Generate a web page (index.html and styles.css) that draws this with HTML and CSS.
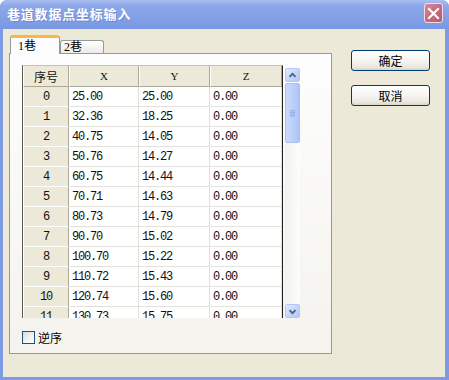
FILE: index.html
```html
<!DOCTYPE html>
<html>
<head>
<meta charset="utf-8">
<link rel="stylesheet" href="styles.css">
</head>
<body>
<div class="window">
  <div class="titlebar">
    <span class="title">巷道数据点坐标输入</span>
    <div class="close">
      <svg width="13" height="13" viewBox="0 0 13 13"><path d="M2 2 L11 11 M11 2 L2 11" stroke="#fff" stroke-width="2.2" stroke-linecap="square"/></svg>
    </div>
  </div>
  <div class="client">
    <div class="tabctl">
      <div class="tabs">
        <div class="tab active">1巷</div>
        <div class="tab">2巷</div>
      </div>
      <div class="panel">
        <div class="gridwrap">
          <div class="grid">
            <div class="hcell corner">序号</div>
            <div class="hcell col">X</div>
            <div class="hcell col">Y</div>
            <div class="hcell col">Z</div>

            <div class="rh">0</div><div class="c">25.00</div><div class="c">25.00</div><div class="c">0.00</div>
            <div class="rh">1</div><div class="c">32.36</div><div class="c">18.25</div><div class="c">0.00</div>
            <div class="rh">2</div><div class="c">40.75</div><div class="c">14.05</div><div class="c">0.00</div>
            <div class="rh">3</div><div class="c">50.76</div><div class="c">14.27</div><div class="c">0.00</div>
            <div class="rh">4</div><div class="c">60.75</div><div class="c">14.44</div><div class="c">0.00</div>
            <div class="rh">5</div><div class="c">70.71</div><div class="c">14.63</div><div class="c">0.00</div>
            <div class="rh">6</div><div class="c">80.73</div><div class="c">14.79</div><div class="c">0.00</div>
            <div class="rh">7</div><div class="c">90.70</div><div class="c">15.02</div><div class="c">0.00</div>
            <div class="rh">8</div><div class="c">100.70</div><div class="c">15.22</div><div class="c">0.00</div>
            <div class="rh">9</div><div class="c">110.72</div><div class="c">15.43</div><div class="c">0.00</div>
            <div class="rh">10</div><div class="c">120.74</div><div class="c">15.60</div><div class="c">0.00</div>
            <div class="rh">11</div><div class="c">130.73</div><div class="c">15.75</div><div class="c">0.00</div>
          </div>
          <div class="scrollbar">
            <div class="sbtn">
              <svg width="15" height="15" viewBox="0 0 15 15"><path d="M4 9 L7.5 5.5 L11 9" fill="none" stroke="#4d6185" stroke-width="2"/></svg>
            </div>
            <div class="thumb">
              <svg width="15" height="10" viewBox="0 0 15 10"><path d="M4.5 2.5 H10.5 M4.5 4.5 H10.5 M4.5 6.5 H10.5 M4.5 8.5 H10.5" stroke="#8ca4e0" stroke-width="1"/></svg>
            </div>
            <div class="track"></div>
            <div class="sbtn">
              <svg width="15" height="15" viewBox="0 0 15 15"><path d="M4 6 L7.5 9.5 L11 6" fill="none" stroke="#4d6185" stroke-width="2"/></svg>
            </div>
          </div>
        </div>
        <label class="check">
          <span class="box"></span>
          <span class="lbl">逆序</span>
        </label>
      </div>
    </div>
    <div class="buttons">
      <div class="btn">确定</div>
      <div class="btn">取消</div>
    </div>
  </div>
</div>
</body>
</html>
```

FILE: styles.css
```css
html, body {
  margin: 0;
  padding: 0;
  background: #ffffff;
}
body {
  width: 449px;
  height: 380px;
  overflow: hidden;
  font-family: "Noto Sans CJK SC", "Liberation Sans", sans-serif;
  font-size: 12px;
  color: #000;
}
.window {
  width: 449px;
  height: 380px;
  display: flex;
  flex-direction: column;
  border-radius: 7px 7px 0 0;
  overflow: hidden;
  background: #7d9ae3;
}
.titlebar {
  height: 29px;
  flex: none;
  display: flex;
  align-items: center;
  justify-content: space-between;
  padding: 0 6px 0 7px;
  background: linear-gradient(#aac0f3 0%, #8ea9ea 18%, #84a1e7 55%, #7d9be4 85%, #7896e2 100%);
}
.title {
  color: #ffffff;
  font-weight: bold;
  font-size: 13px;
  letter-spacing: 0.8px;
  text-shadow: 1px 1px 0 #6f87c9;
  margin-top: -2px;
}
.close {
  width: 17px;
  height: 18px;
  border: 1px solid #f0dbe3;
  border-radius: 3px;
  background: linear-gradient(135deg, #d58a9b 0%, #c46c81 50%, #b25a71 100%);
  display: flex;
  align-items: center;
  justify-content: center;
  margin-top: -3px;
}
.client {
  flex: 1;
  display: flex;
  align-items: flex-start;
  background: #ece9d8;
  margin: 0 4px 3px 3px;
  padding: 6px 0 0 6px;
}
.tabctl {
  width: 323px;
  display: flex;
  flex-direction: column;
}
.tabs {
  display: flex;
  align-items: flex-end;
  height: 18px;
  padding-left: 1px;
  position: relative;
  z-index: 1;
}
.tab {
  height: 13px;
  width: 44px;
  box-sizing: border-box;
  border: 1px solid #919b9c;
  border-bottom: none;
  border-radius: 3px 3px 0 0;
  background: linear-gradient(#ffffff, #ecebe6);
  padding-left: 3px;
  line-height: 12px;
  font-size: 12px;
  font-family: "Liberation Serif", "Noto Sans CJK SC", serif;
}
.tab.active {
  height: 19px;
  width: 50px;
  margin-bottom: -1px;
  background: #fcfcfe;
  border-top: 3px solid #f7b844;
  padding-left: 7px;
  padding-top: 2px;
  line-height: 12px;
}
.panel {
  height: 301px;
  box-sizing: border-box;
  border: 1px solid #919b9c;
  background: linear-gradient(#fdfdfd, #f4f3ee);
  padding: 11px 0 0 12px;
  display: flex;
  flex-direction: column;
}
.gridwrap {
  display: flex;
  height: 253px;
  width: 280px;
}
.grid {
  width: 261px;
  height: 253px;
  overflow: hidden;
  box-sizing: border-box;
  border-left: 1px solid #5a5a5a;
  border-right: 1px solid #202020;
  border-top: 1px solid #c5c2b2;
  background: #ffffff;
  display: grid;
  grid-template-columns: 46px 70px 71px 72px;
  grid-auto-rows: 20px;
  grid-template-rows: 21px;
  align-content: start;
  font-family: "Liberation Mono", monospace;
  font-size: 12px;
  letter-spacing: -1.2px;
  color: #111;
}
.hcell {
  box-sizing: border-box;
  background: #ece9d8;
  border-right: 1px solid #aca899;
  border-bottom: 1px solid #aca899;
  border-left: 1px solid #ffffff;
  display: flex;
  align-items: center;
  justify-content: center;
}
.corner {
  font-family: "Noto Sans CJK SC", sans-serif;
  letter-spacing: 0;
  font-size: 12px;
}
.col {
  font-family: "Liberation Serif", serif;
  letter-spacing: 0;
  font-size: 11px;
}
.rh {
  box-sizing: border-box;
  background: #ece9d8;
  border-right: 1px solid #aca899;
  border-bottom: 1px solid #ffffff;
  border-left: 1px solid #ffffff;
  display: flex;
  align-items: center;
  justify-content: center;
  letter-spacing: -1.2px;
}
.c {
  box-sizing: border-box;
  border-right: 1px solid #e2e1da;
  border-bottom: 1px solid #e2e1da;
  padding-left: 3px;
  display: flex;
  align-items: center;
}
.scrollbar {
  width: 16px;
  margin-left: 2px;
  margin-top: 3px;
  height: 250px;
  display: flex;
  flex-direction: column;
}
.sbtn {
  width: 15px;
  height: 14px;
  box-sizing: border-box;
  border: 1px solid #b6c9f4;
  border-radius: 2px;
  background: linear-gradient(135deg, #e2ebfe 0%, #c6d6fb 50%, #b4c8f6 100%);
  display: flex;
  align-items: center;
  justify-content: center;
  overflow: hidden;
}
.thumb {
  width: 15px;
  height: 60px;
  margin-top: 1px;
  box-sizing: border-box;
  border: 1px solid #a9bff0;
  border-radius: 2px;
  background: linear-gradient(90deg, #cbdafc 0%, #bcd0fa 50%, #aec4f6 100%);
  display: flex;
  align-items: center;
  justify-content: center;
}
.track {
  flex: 1;
  width: 15px;
  background: linear-gradient(90deg, #f3f2ee, #fdfdfb);
}
.check {
  display: flex;
  align-items: center;
  margin-top: 13px;
  height: 13px;
}
.box {
  width: 13px;
  height: 13px;
  box-sizing: border-box;
  border: 1px solid #1c5180;
  background: linear-gradient(135deg, #dcdcd6 0%, #f4f4f0 60%, #ffffff 100%);
}
.lbl {
  margin-left: 3px;
  font-size: 12px;
  line-height: 13px;
}
.buttons {
  margin-left: 19px;
  margin-top: 15px;
  display: flex;
  flex-direction: column;
  gap: 14px;
}
.btn {
  width: 79px;
  height: 21px;
  box-sizing: border-box;
  border: 1px solid #003c74;
  border-radius: 3px;
  background: linear-gradient(#ffffff 0%, #f6f5f1 50%, #e9e7df 85%, #d8d4c6 100%);
  display: flex;
  align-items: center;
  justify-content: center;
  font-size: 12px;
}
```
